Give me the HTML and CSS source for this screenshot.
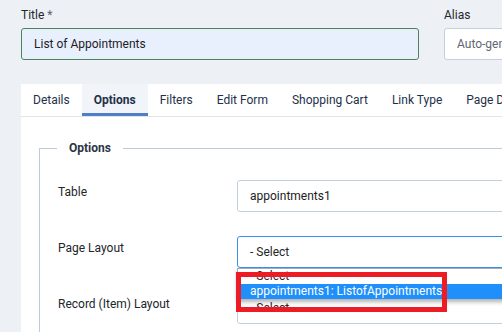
FILE: index.html
```html
<!DOCTYPE html>
<html lang="en">
<head>
  <meta charset="UTF-8" />
  <meta name="viewport" content="width=device-width, initial-scale=1" />
  <title>Menu Item: Options</title>
  <link rel="stylesheet" href="styles.css">
</head>
<body>

<div class="page">
  <div class="top-fields">
    <div class="field field-title">
      <label class="field-label" for="title">Title <span class="star">*</span></label>
      <input class="input input-filled" id="title" type="text" value="List of Appointments" />
    </div>
    <div class="field field-alias">
      <label class="field-label" for="alias">Alias</label>
      <input class="input" id="alias" type="text" placeholder="Auto-generate from title" />
    </div>
  </div>

  <div class="panel">
    <ul class="tabs">
      <li>Details</li>
      <li class="active">Options</li>
      <li>Filters</li>
      <li>Edit Form</li>
      <li>Shopping Cart</li>
      <li>Link Type</li>
      <li>Page Display</li>
    </ul>

    <div class="tab-body">
      <fieldset class="options">
        <legend>Options</legend>
        <div class="form-grid">
          <label class="row-label">Table</label>
          <div class="control">
            <input class="input" type="text" value="appointments1" />
          </div>

          <label class="row-label">Page Layout</label>
          <div class="control control-open">
            <div class="select select-focus">- Select</div>
            <ul class="dropdown">
              <li>- Select</li>
              <li class="hover">appointments1: ListofAppointments1</li>
            </ul>
            <div class="mark"></div>
          </div>

          <label class="row-label">Record (Item) Layout</label>
          <div class="control">
            <div class="select">- Select</div>
          </div>
        </div>
      </fieldset>
    </div>
  </div>
</div>

</body>
</html>
```

FILE: styles.css
```css
body {
  font-family: Roboto, "Noto Sans", "Liberation Sans", sans-serif;
  font-size: 12px;
  background: #edf1f6;
  color: #22262a;
  margin: 0;
  overflow: hidden;
}

.page {
  width: 640px;
  padding: 7px 0 0 21px;
}

.top-fields {
  display: flex;
  gap: 25px;
}

.field {
  display: flex;
  flex-direction: column;
}

.field-title {
  width: 398px;
}

.field-alias {
  width: 200px;
}

.field-label {
  line-height: 16px;
  margin-bottom: 5px;
  color: #22262a;
}

.star {
  color: #5a6270;
}

.input {
  box-sizing: border-box;
  height: 32px;
  width: 100%;
  padding: 0 12px;
  font: inherit;
  color: #1d2126;
  background: #fff;
  border: 1px solid #c4cfdd;
  border-radius: 3px;
  outline: none;
}

.input::placeholder {
  color: #5f6672;
}

.input-filled {
  background: #e8f0fe;
  border-color: #4a8458;
}

/* panel z zakładkami */
.panel {
  margin-top: 24px;
  background: #fff;
  height: 260px;
}

.tabs {
  list-style: none;
  margin: 0;
  padding: 0;
  display: flex;
  border-bottom: 1px solid #dfe4ec;
}

.tabs li {
  padding: 0 12px;
  line-height: 32px;
  color: #23304a;
  white-space: nowrap;
}

.tabs li.active {
  font-weight: 700;
  background: #f1f4f9;
  box-shadow: inset 0 -3px 0 #4f80c6;
}

.tab-body {
  padding: 21px 0 0 18px;
}

.options {
  margin: 0;
  padding: 22px 0 40px 18px;
  border: 1px solid #bccadc;
  border-right: none;
}

.options legend {
  padding: 0 12px;
  margin-left: -1px;
  line-height: 20px;
  font-weight: 700;
  color: #2b3444;
}

.form-grid {
  display: grid;
  grid-template-columns: 179px 300px;
  row-gap: 24px;
}

.row-label {
  padding-top: 2px;
  line-height: 20px;
}

.control {
  position: relative;
}

.select {
  box-sizing: border-box;
  height: 32px;
  padding: 0 12px;
  line-height: 30px;
  border: 1px solid #c4cfdd;
  border-radius: 3px;
  background: #fff;
}

.select-focus {
  border-color: #3b8ff0;
}

.dropdown {
  position: absolute;
  top: 100%;
  left: 0;
  right: 0;
  z-index: 2;
  margin: 0;
  padding: 0;
  list-style: none;
  background: #fff;
  border: 1px solid #a7acb2;
  border-bottom: none;
  box-shadow: 0 3px 4px rgba(0, 0, 0, 0.3);
}

.dropdown li {
  padding: 0 12px;
  line-height: 15px;
  white-space: nowrap;
}

.dropdown li.hover {
  background: #1e8ffb;
  color: #fff;
}

/* czerwona ramka zaznaczenia */
.mark {
  position: absolute;
  left: -1px;
  top: 36px;
  width: 211px;
  height: 40px;
  box-sizing: border-box;
  border: 5px solid #ed1c24;
  z-index: 3;
  pointer-events: none;
}
```
